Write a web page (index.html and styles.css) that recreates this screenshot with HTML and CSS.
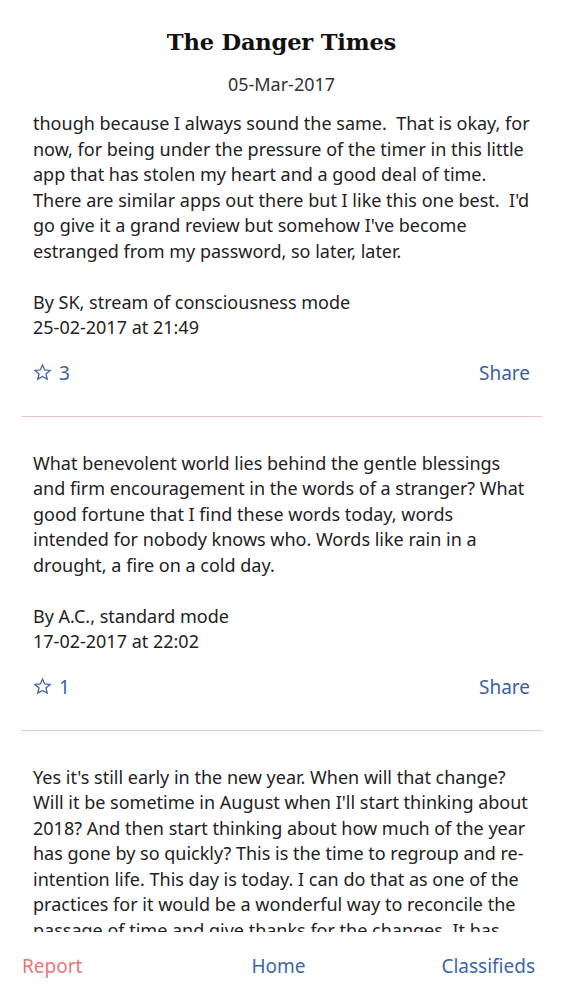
FILE: index.html
```html
<!DOCTYPE html>
<html lang="en">
<head>
<meta charset="utf-8">
<title>The Danger Times</title>
<link rel="stylesheet" href="styles.css">
</head>
<body>
<div class="app">
  <header class="header">
    <h1 class="title">The Danger Times</h1>
    <div class="date">05-Mar-2017</div>
  </header>
  <main class="feed">
    <article class="post">
      <p class="text">though because I always sound the same.&nbsp; That is okay, for now, for being under the pressure of the timer in this little app that has stolen my heart and a good deal of time.&nbsp; There are similar apps out there but I like this one best.&nbsp; I'd go give it a grand review but somehow I've become estranged from my password, so later, later.</p>
      <p class="meta">By SK, stream of consciousness mode<br>25-02-2017 at 21:49</p>
      <div class="actions">
        <span class="stars"><svg class="star" viewBox="0 0 24 24" aria-hidden="true"><path d="M12 2.6l2.75 6.2 6.75.6-5.1 4.45 1.55 6.6L12 16.95 6.05 20.45l1.55-6.6L2.5 9.4l6.75-.6z"/></svg>3</span>
        <span class="share">Share</span>
      </div>
    </article>
    <article class="post">
      <p class="text">What benevolent world lies behind the gentle blessings and firm encouragement in the words of a stranger? What good fortune that I find these words today, words intended for nobody knows who. Words like rain in a drought, a fire on a cold day.</p>
      <p class="meta">By A.C., standard mode<br>17-02-2017 at 22:02</p>
      <div class="actions">
        <span class="stars"><svg class="star" viewBox="0 0 24 24" aria-hidden="true"><path d="M12 2.6l2.75 6.2 6.75.6-5.1 4.45 1.55 6.6L12 16.95 6.05 20.45l1.55-6.6L2.5 9.4l6.75-.6z"/></svg>1</span>
        <span class="share">Share</span>
      </div>
    </article>
    <article class="post">
      <p class="text">Yes it's still early in the new year. When will that change? Will it be sometime in August when I'll start thinking about 2018? And then start thinking about how much of the year has gone by so quickly? This is the time to regroup and re-intention life. This day is today. I can do that as one of the practices for it would be a wonderful way to reconcile the passage of time and give thanks for the changes. It has been a year of many things and I am grateful.</p>
    </article>
  </main>
  <nav class="tabbar">
    <span class="tab report">Report</span>
    <span class="tab home">Home</span>
    <span class="tab classifieds">Classifieds</span>
  </nav>
</div>
</body>
</html>
```
FILE: styles.css
```css
html, body {
  margin: 0;
  padding: 0;
  background: #ffffff;
}
.app {
  width: 563px;
  height: 1000px;
  display: flex;
  flex-direction: column;
  font-family: "Noto Sans", "Open Sans", sans-serif;
  color: #222;
}
.header {
  display: flex;
  flex-direction: column;
  align-items: center;
  padding-top: 26px;
}
.title {
  margin: 0;
  font-family: "DejaVu Serif", serif;
  font-weight: bold;
  font-size: 22.6px;
  line-height: 32px;
  color: #111;
  letter-spacing: -0.2px;
}
.date {
  margin-top: 14px;
  font-size: 18px;
  line-height: 24px;
  color: #333;
}
.feed {
  flex: 1;
  overflow: hidden;
  padding-top: 15px;
}
.post {
  margin: 0 21px;
  padding: 0 12px 30px;
  border-bottom: 1px solid #f2c3ca;
}
.post + .post {
  padding-top: 34px;
}
.post:last-child {
  border-bottom: none;
}
.text, .meta {
  margin: 0;
  font-size: 18px;
  line-height: 25.5px;
  color: #222;
}
.meta {
  margin-top: 25.5px;
}
.actions {
  margin-top: 19px;
  display: flex;
  justify-content: space-between;
  align-items: center;
  font-size: 19px;
  line-height: 26px;
  color: #3a5f9e;
}
.stars {
  display: flex;
  align-items: center;
  gap: 7px;
}
.star {
  width: 19px;
  height: 19px;
  fill: none;
  stroke: #4a62a8;
  stroke-width: 1.7;
  stroke-linejoin: miter;
}
.tabbar {
  height: 68px;
  flex-shrink: 0;
  display: grid;
  grid-template-columns: 1fr auto 1fr;
  align-items: center;
  padding: 0 28px 0 22px;
  font-size: 19px;
}
.tab {
  line-height: 26px;
}
.report { color: #e8767a; justify-self: start; }
.home { color: #3a67a8; justify-self: center; }
.classifieds { color: #3a67a8; justify-self: end; }
```
